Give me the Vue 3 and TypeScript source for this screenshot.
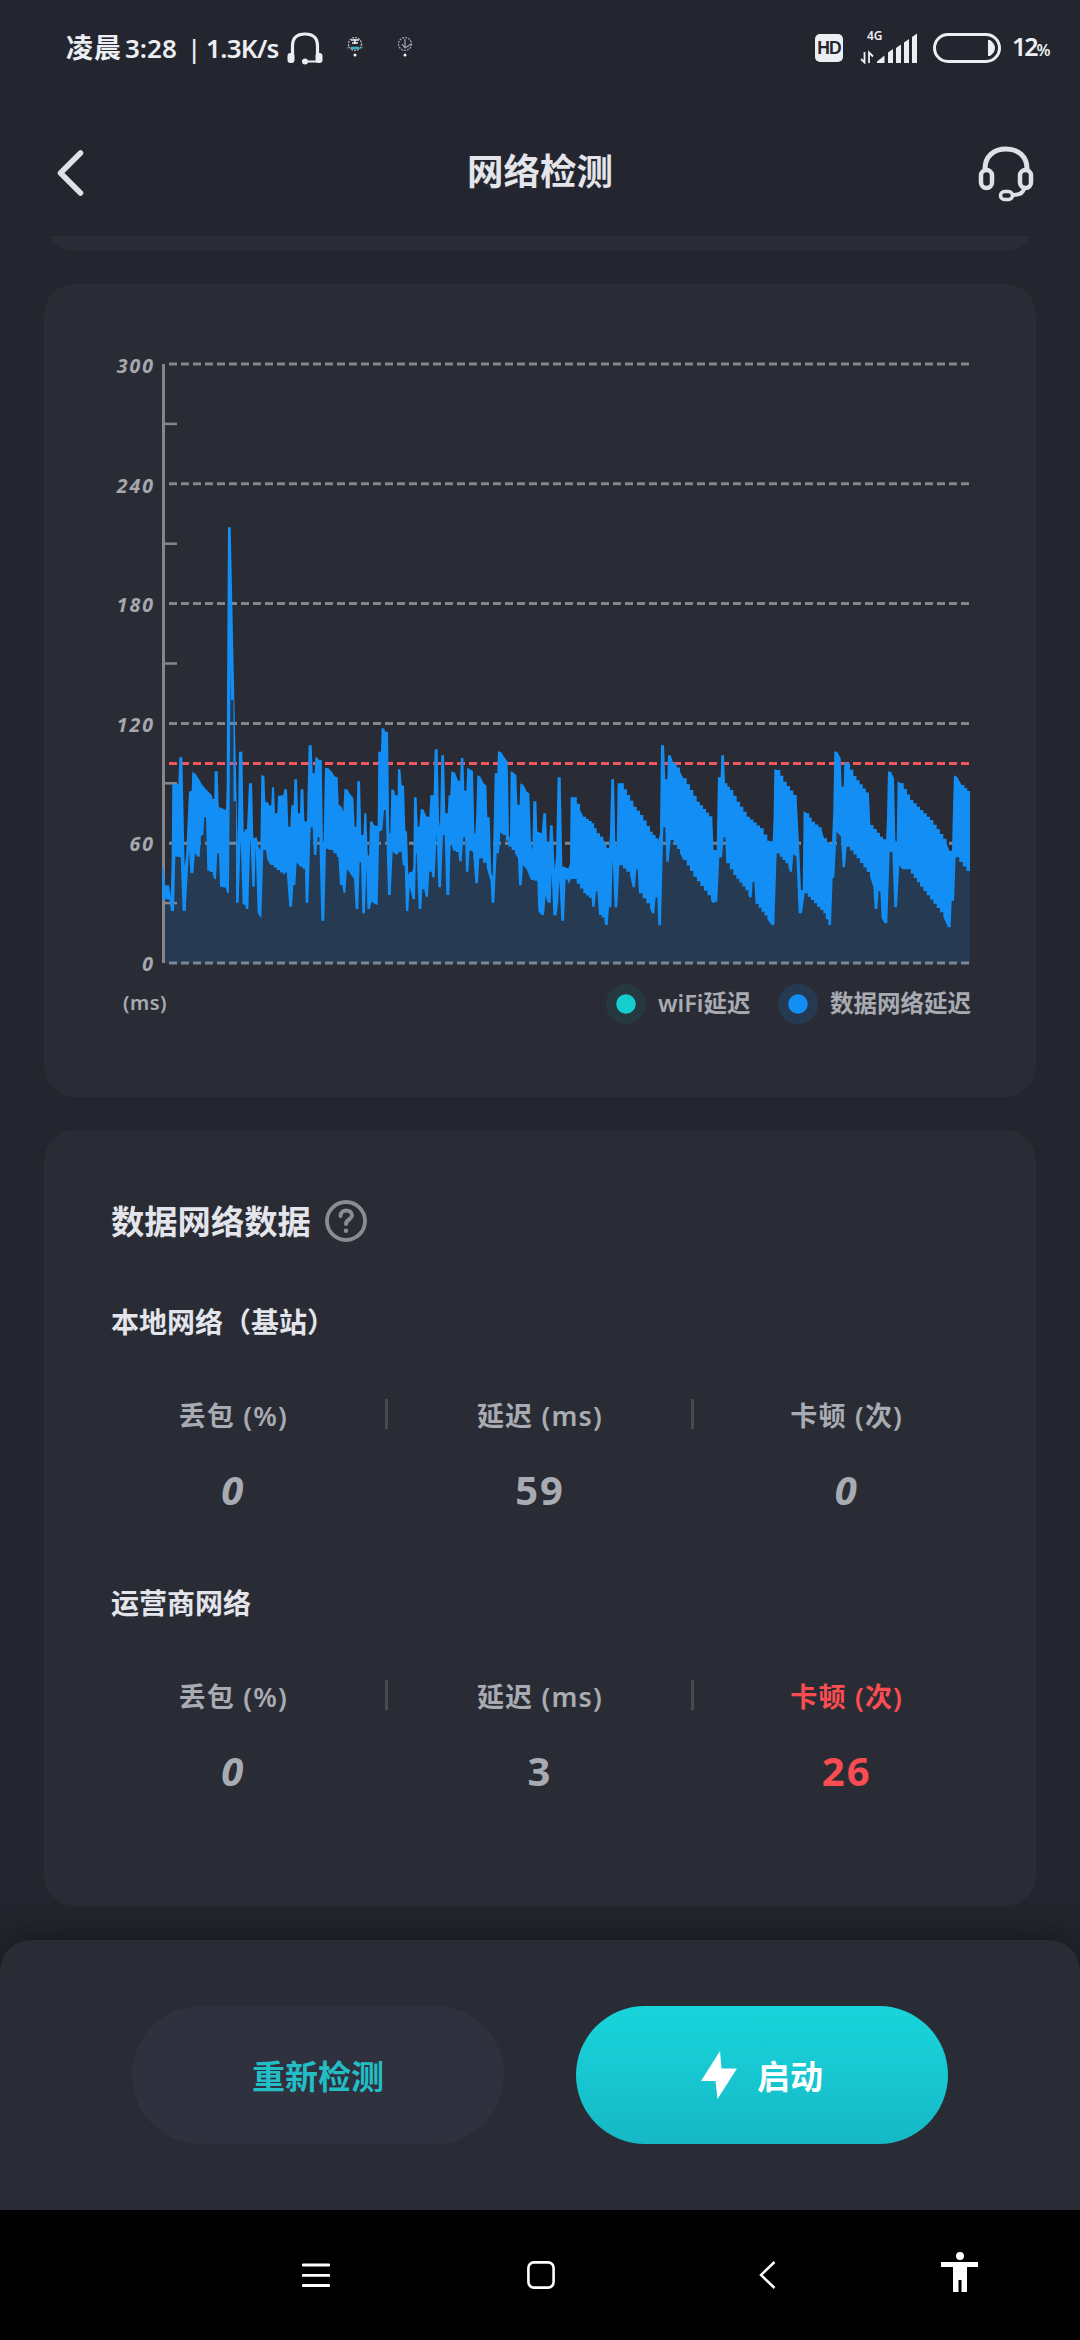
<script setup lang="ts">
type Point = [number, number]

interface Metric {
  label: string
  value: string
  alert?: boolean
}

interface Group {
  title: string
  metrics: Metric[]
}

const groups: Group[] = [
  {
    title: '本地网络（基站）',
    metrics: [
      { label: '丢包 (%)', value: '0' },
      { label: '延迟 (ms)', value: '59' },
      { label: '卡顿 (次)', value: '0' },
    ],
  },
  {
    title: '运营商网络',
    metrics: [
      { label: '丢包 (%)', value: '0' },
      { label: '延迟 (ms)', value: '3' },
      { label: '卡顿 (次)', value: '26', alert: true },
    ],
  },
]

const scaleLabels = [300, 240, 180, 120, 60, 0]
const gridLines = [0, 1, 2, 3, 4, 5].map((i) => 2 + i * 119.8)
const ticks = [0, 1, 2, 3, 4].map((i) => 61.9 + i * 119.8)

// Upper and lower bounds of the latency trace; three units per pixel, baseline at 790.
const shift = (offset: number, flat: number[]): Point[] => {
  const out: Point[] = []
  for (let i = 0; i < flat.length; i += 2) out.push([flat[i] + offset, flat[i + 1]])
  return out
}

const upper: Point[] = [
  ...shift(0, [
    37, 500, 41, 510, 46, 556, 57, 556, 62, 590, 65, 480, 67, 252, 85, 252, 88, 172, 97, 172, 104, 500, 108, 470, 117, 275, 125, 272,
    127, 215, 137, 222, 145, 235, 155, 252, 165, 265, 175, 275, 185, 285, 188, 297, 193, 297, 194, 214, 203, 214, 206, 320,
    215, 325, 228, 330, 230, 260, 231, 0, 234, -518, 242, -518, 253, 0, 263, 440, 267, 155, 277, 155, 281, 400, 286, 388, 291, 388,
    297, 250, 306, 250, 310, 415, 320, 412, 326, 440, 331, 450, 334, 225, 343, 228, 346, 305, 355, 308, 358, 318, 364, 315,
    366, 262, 372, 262, 375, 340, 382, 340, 384, 287, 400, 285, 403, 268, 411, 268, 415, 380, 421, 380, 424, 316, 431, 316,
    433, 238, 441, 238, 444, 340, 450, 340, 452, 268, 460, 268, 463, 364, 471, 364, 476, 136, 485, 136, 488, 220, 494, 220,
    496, 172, 504, 174, 506, 180, 515, 180, 519, 430, 521, 420, 525, 203, 535, 205, 545, 215, 555, 230, 563, 232, 566, 315, 573, 318,
    580, 335, 583, 268, 592, 268, 600, 282, 610, 293, 614, 380, 619, 382, 622, 244, 630, 244, 634, 405, 640, 405, 643, 340,
    649, 340, 653, 460, 657, 470, 660, 364, 668, 365, 672, 376, 683, 378, 685, 155, 693, 155, 695, 83, 704, 88, 705, 95, 714, 95,
    718, 400, 721, 400, 724, 268, 733, 270, 735, 285, 743, 287, 744, 208, 751, 208, 755, 256, 762, 258, 766, 392, 771, 395,
    775, 525, 779, 515, 787, 515, 790, 500,
  ]),
  ...shift(750, [
    42, 292, 50, 292, 53, 380, 58, 380, 62, 328, 70, 328, 75, 340, 80, 350, 88, 350, 91, 286, 101, 286, 104, 148, 113, 148,
    117, 360, 120, 380, 124, 166, 132, 166, 136, 340, 143, 340, 146, 286, 151, 286, 154, 214, 165, 218, 174, 242, 180, 242,
    183, 174, 190, 174, 193, 272, 199, 272, 202, 203, 210, 208, 219, 214, 223, 400, 226, 400, 229, 340, 232, 226, 241, 230,
    252, 252, 259, 256, 262, 352, 269, 352, 274, 520, 278, 530, 284, 220, 292, 220, 294, 154, 303, 156, 312, 170, 323, 185,
    327, 410, 330, 410, 332, 214, 341, 218, 349, 226, 352, 315, 359, 315, 361, 250, 371, 256, 380, 275, 388, 280, 393, 430,
    397, 450, 400, 304, 409, 304, 412, 395, 425, 400, 430, 340, 438, 340, 441, 425, 448, 425, 450, 376, 458, 376, 464, 510,
    468, 470, 473, 232, 482, 232, 487, 500, 505, 508, 510, 490, 512, 292, 521, 292, 540, 330, 550, 350, 575, 370, 590, 400,
    610, 420, 618, 430, 620, 445, 627, 445, 630, 400, 634, 238, 642, 238, 646, 430, 650, 440, 653, 250, 662, 250, 700, 320, 720, 345,
    750, 395, 775, 425, 780, 400, 783, 136, 792, 136, 796, 238, 802, 238, 804, 166, 812, 166, 820, 190, 840, 215,
  ]),
  ...shift(1590, [
    10, 235, 50, 305, 97, 360, 101, 450, 110, 450, 114, 232, 122, 232, 124, 166, 132, 166, 135, 250, 150, 270, 170, 305, 200, 350,
    240, 385, 262, 422, 278, 425, 281, 350, 283, 208, 292, 210, 310, 245, 350, 298, 357, 430, 363, 570, 368, 570, 371, 333,
    380, 340, 395, 365, 425, 390, 432, 415, 450, 438, 456, 430, 460, 330, 463, 154, 472, 156, 482, 175, 485, 260, 491, 260,
    493, 185, 500, 190, 520, 228, 567, 290, 571, 375, 600, 410, 618, 425, 621, 350, 624, 214, 633, 216, 642, 235, 646, 420,
    650, 430, 653, 244, 662, 250, 690, 300, 750, 360, 800, 430, 808, 452, 816, 452, 819, 330, 822, 226, 831, 230, 845, 255, 870, 282,
  ]),
]

const lower: Point[] = [
  ...shift(0, [
    37, 600, 50, 598, 58, 598, 63, 633, 72, 633, 76, 470, 92, 472, 98, 633, 107, 633, 117, 450, 121, 520, 130, 520, 135, 458,
    142, 470, 149, 470, 153, 408, 160, 405, 163, 352, 168, 352, 172, 512, 188, 520, 192, 537, 198, 537, 202, 460, 207, 460,
    210, 560, 228, 565, 231, 578, 237, 580, 241, 0, 242, -100, 243, 0, 258, 608, 266, 608, 272, 420, 278, 612, 286, 616, 288, 627,
    295, 627, 301, 415, 307, 560, 314, 560, 317, 440, 323, 640, 334, 655, 340, 450, 348, 450, 352, 480, 362, 495, 380, 510,
    400, 525, 410, 515, 418, 620, 426, 620, 430, 555, 436, 555, 440, 487, 450, 500, 465, 513, 467, 608, 475, 608, 482, 382,
    488, 382, 492, 465, 499, 465, 503, 412, 508, 412, 514, 662, 523, 662, 528, 445, 540, 450, 560, 470, 565, 470, 570, 555,
    577, 555, 580, 578, 586, 578, 591, 508, 600, 520, 612, 537, 617, 627, 625, 627, 629, 487, 633, 487, 637, 640, 645, 640,
    649, 500, 652, 627, 660, 627, 664, 605, 675, 612, 683, 615, 688, 395, 697, 390, 702, 330, 707, 330, 714, 585, 722, 585,
    728, 455, 740, 465, 748, 455, 755, 455, 758, 495, 764, 497, 768, 633, 775, 633, 779, 560, 788, 598, 795, 598, 798, 460,
  ]),
  ...shift(750, [
    50, 460, 56, 627, 64, 627, 67, 568, 73, 568, 77, 590, 84, 590, 88, 515, 95, 515, 97, 532, 104, 532, 110, 400, 115, 562,
    123, 562, 129, 405, 134, 405, 139, 585, 148, 585, 152, 425, 160, 452, 175, 460, 178, 484, 185, 484, 190, 412, 195, 412,
    198, 515, 205, 515, 209, 450, 219, 455, 226, 550, 234, 550, 238, 475, 260, 502, 272, 545, 275, 608, 283, 608, 290, 460,
    297, 460, 301, 397, 310, 405, 325, 440, 345, 460, 354, 475, 357, 556, 365, 556, 369, 496, 380, 508, 393, 540, 412, 545,
    415, 633, 424, 645, 432, 645, 437, 587, 443, 608, 452, 608, 455, 520, 460, 646, 470, 646, 475, 600, 478, 540, 484, 662,
    492, 662, 497, 537, 503, 540, 507, 553, 513, 537, 520, 537, 550, 580, 575, 600, 577, 620, 584, 620, 588, 574, 592, 574,
    597, 645, 613, 660, 615, 675, 623, 675, 627, 622, 634, 622, 638, 480, 644, 622, 652, 622, 658, 496, 690, 525, 698, 562,
    705, 562, 709, 508, 713, 508, 717, 580, 750, 625, 756, 640, 763, 640, 767, 592, 772, 592, 775, 676, 783, 676, 790, 382,
    796, 382, 799, 485, 806, 485, 812, 420, 840, 460,
  ]),
  ...shift(1590, [
    10, 480, 40, 530, 93, 600, 97, 608, 112, 603, 118, 472, 126, 472, 131, 412, 136, 412, 139, 490, 160, 525, 205, 582, 207, 592,
    215, 592, 218, 545, 223, 545, 227, 612, 262, 658, 275, 675, 283, 675, 290, 460, 325, 500, 330, 515, 336, 515, 340, 462,
    349, 470, 356, 640, 366, 640, 374, 580, 430, 640, 445, 675, 453, 675, 458, 533, 463, 533, 470, 395, 483, 410, 488, 502,
    495, 502, 500, 440, 530, 475, 570, 530, 580, 560, 584, 627, 592, 627, 596, 574, 601, 574, 605, 655, 614, 670, 622, 670,
    629, 455, 637, 455, 643, 622, 651, 622, 658, 496, 667, 508, 683, 508, 720, 560, 790, 650, 804, 682, 812, 682, 815, 603, 822, 603,
    827, 472, 870, 527,
  ]),
]

// Long slopes are drawn as one stair per sample.
const stair = (points: Point[]): Point[] => {
  const out: Point[] = [points[0]]
  for (let i = 1; i < points.length; i++) {
    const [x0, y0] = points[i - 1]
    const [x1, y1] = points[i]
    const n = Math.round((x1 - x0) / 9.7)
    if (n > 1) {
      for (let k = 1; k <= n; k++) {
        const x = x0 + ((x1 - x0) * k) / n
        out.push([x, y0 + ((y1 - y0) * (k - 1)) / n])
        out.push([x, y0 + ((y1 - y0) * k) / n])
      }
    } else {
      out.push([x1, y1])
    }
  }
  return out
}

const join = (points: Point[]): string => points.map(([x, y]) => `${x.toFixed(1)},${y.toFixed(1)}`).join(' ')
const top = stair(upper)
const traceShape = join([...top, ...stair(lower).reverse()])
const areaShape = join([...top, [2460, 790], [39, 790]])
</script>

<template>
  <div class="screen">
    <div class="status">
      <span class="clock">凌晨</span>
      <span class="time">3:28</span>
      <span class="bar">|</span>
      <span class="speed">1.3K/s</span>
      <svg class="phones" width="36" height="34" viewBox="0 0 36 34">
        <path d="M5.500 24V15C5.500 6.500 10 3 18 3s12.500 3.500 12.500 12v9" fill="none" stroke="#eceef2" stroke-width="3.200" />
        <rect x="0.500" y="22" width="7" height="10" rx="3" fill="#eceef2" />
        <rect x="28.500" y="22" width="7" height="10" rx="3" fill="#eceef2" />
        <path d="M18 30.500h13" stroke="#eceef2" stroke-width="2" />
        <circle cx="18" cy="30.500" r="3" fill="#eceef2" />
      </svg>
      <svg class="mini" width="70" height="26" viewBox="0 0 70 26">
        <circle cx="10" cy="9" r="6.500" fill="none" stroke="#b9bdc8" stroke-width="1.200" stroke-dasharray="2 1" />
        <path d="M6 5h8M7 8h6M10 4v5" stroke="#e8eaf0" stroke-width="1.700" />
        <path d="M6 13h8" stroke="#35b8c6" stroke-width="2.500" />
        <path d="M2 13l2-1M16 13l2-1" stroke="#5d6174" stroke-width="1.500" />
        <circle cx="10" cy="20" r="1.500" fill="#fff" />
        <circle cx="60" cy="9" r="6.500" fill="none" stroke="#aaa4bb" stroke-width="1.200" stroke-dasharray="2 1" />
        <path d="M60 4v8M57 9l3 4 6-4" fill="none" stroke="#aaa4bb" stroke-width="1.200" />
        <circle cx="60" cy="20" r="1.500" fill="#fff" />
      </svg>
      <span class="fill"></span>
      <span class="hd">HD</span>
      <div class="signal">
        <span class="net">4G</span>
        <svg width="58" height="32" viewBox="0 0 58 32">
          <path d="M4.500 20v10.500L1 27M9 31V20.500l4 4" fill="none" stroke="#eceef2" stroke-width="1.800" />
          <path
            d="M17 31v-1.500l7.500-6V31zM28 31V20.500l5-3.500v14zM36 31V16l5-3.500V31zM44 31V10.500L49 7v24zM52 31V5l5-3.500V31z"
            fill="#eceef2"
          />
        </svg>
      </div>
      <svg class="battery" width="68" height="30" viewBox="0 0 68 30">
        <rect x="1.500" y="1.500" width="65" height="27" rx="13.500" fill="none" stroke="#eceef2" stroke-width="3" />
        <path d="M55 7h2c3 2 5 5 5 8s-2 6-5 8h-2z" fill="#eceef2" />
      </svg>
      <span class="percent">12<small>%</small></span>
    </div>

    <header class="header">
      <svg width="27" height="46" viewBox="0 0 27 46">
        <path d="M23.500 3L3.500 23l20 20" fill="none" stroke="#dfe1e8" stroke-width="5.500" stroke-linecap="round" stroke-linejoin="round" />
      </svg>
      <h1>网络检测</h1>
      <svg width="56" height="56" viewBox="0 0 56 56" fill="none" stroke="#dfe1e8">
        <path d="M7 23C7 10 16 3 28 3s21 7 21 20" stroke-width="5" />
        <rect x="3" y="24" width="11" height="18" rx="5.500" stroke-width="4.500" />
        <rect x="42" y="24" width="11" height="18" rx="5.500" stroke-width="4.500" />
        <path d="M46 43c-1 4-5 6-11 6" stroke-width="4" />
        <rect x="22.500" y="45.500" width="12" height="8" rx="4" stroke-width="3.500" />
      </svg>
    </header>

    <main class="content">
      <div class="peek"><div class="peek-card"></div></div>

      <section class="card chart-card">
        <div class="chart">
          <div class="scale">
            <span v-for="n in scaleLabels" :key="n">{{ n }}</span>
          </div>
          <svg class="plot" width="810" height="604" viewBox="0 0 810 604">
            <path v-for="y in gridLines" :key="y" :d="`M8 ${y}H809`" stroke="#83868d" stroke-width="3" stroke-dasharray="8 4" />
            <path d="M8 401.500H809" stroke="#f4565d" stroke-width="3" stroke-dasharray="8 4" />
            <g transform="translate(-11 338) scale(0.33333)">
              <polygon :points="areaShape" fill="#128df2" fill-opacity="0.15" />
            </g>
            <path d="M2.500 2V601" stroke="#83868d" stroke-width="3" />
            <path v-for="y in ticks" :key="y" :d="`M2 ${y}H16`" stroke="#83868d" stroke-width="2.500" />
            <g transform="translate(-11 338) scale(0.33333)">
              <polygon :points="traceShape" fill="#128ef4" />
            </g>
          </svg>
        </div>
        <div class="legend">
          <span class="unit">(ms)</span>
          <span class="dot teal"></span>
          <span class="wifi">wiFi延迟</span>
          <span class="dot blue"></span>
          <span class="mobile">数据网络延迟</span>
        </div>
      </section>

      <section class="card data-card">
        <div class="heading">
          <h2>数据网络数据</h2>
          <span class="help">
            <svg width="42" height="42" viewBox="0 0 42 42" fill="none" stroke="#8a8c94">
              <circle cx="21" cy="21" r="19" stroke-width="3.800" />
              <path d="M15.500 16c0-4 3-5.500 5.500-5.500 3 0 6 1.500 6 5s-6 4.500-6 8.500" stroke-width="4" stroke-linecap="round" />
              <circle cx="21" cy="30.700" r="2.300" fill="#8a8c94" stroke="none" />
            </svg>
          </span>
        </div>
        <div v-for="group in groups" :key="group.title" class="group">
          <h3>{{ group.title }}</h3>
          <div class="metrics">
            <div v-for="m in group.metrics" :key="m.label" class="metric" :class="{ alert: m.alert }">
              <span class="label">{{ m.label }}</span>
              <span class="value" :class="{ zero: m.value === '0' }">{{ m.value }}</span>
            </div>
          </div>
        </div>
      </section>
    </main>

    <footer class="actions">
      <button class="retry">重新检测</button>
      <button class="start">
        <svg width="36" height="48" viewBox="0 0 36 48"><path d="M19 0L0 30h14.500L16.500 48 36 17.500H20.500z" fill="#fff" /></svg>
        <span>启动</span>
      </button>
    </footer>

    <nav class="nav">
      <svg width="28" height="28" viewBox="0 0 28 28"><path d="M1 4h26M1 14.300h26M1 24.500h26" stroke="#fff" stroke-width="2.800" stroke-linecap="round" /></svg>
      <svg width="28" height="28" viewBox="0 0 28 28"><rect x="1.400" y="1.400" width="25.200" height="25.200" rx="5.500" fill="none" stroke="#fff" stroke-width="2.600" /></svg>
      <svg width="17" height="28" viewBox="0 0 17 28"><path d="M15.500 1L2 14l13.500 13" fill="none" stroke="#fff" stroke-width="2.500" /></svg>
      <svg width="38" height="40" viewBox="0 0 38 40"><circle cx="19" cy="4" r="4" fill="#fff" /><path d="M0 10h37v5H26v25h-5.500V28h-3v12H12V15H0z" fill="#fff" /></svg>
    </nav>
  </div>
</template>

<style>
body {
  margin: 0;
  background: #24262f;
}
</style>

<style scoped>
.screen {
  width: 1080px;
  height: 2340px;
  display: flex;
  flex-direction: column;
  overflow: hidden;
  background: #24262f;
  color: #e3e5eb;
  font-family: 'Noto Sans', 'Noto Sans CJK SC', sans-serif;
  white-space: nowrap;
}
h1,
h2,
h3 {
  margin: 0;
}
svg {
  display: block;
  flex: none;
}
.status {
  height: 96px;
  flex: none;
  box-sizing: border-box;
  padding: 0 31px 0 66px;
  display: flex;
  align-items: center;
  font-size: 26px;
  font-weight: 600;
  color: #eceef2;
}
.status > span {
  line-height: 32px;
}
.clock {
  width: 59px;
  font-size: 27px;
  font-weight: 700;
  letter-spacing: 1px;
}
.time {
  width: 62px;
}
.bar {
  width: 19px;
  font-weight: 500;
}
.speed {
  width: 81px;
  letter-spacing: -0.700px;
}
.mini {
  margin-left: 22px;
}
.fill {
  flex: 1;
}
.hd {
  width: 28px;
  height: 28px;
  line-height: 29px !important;
  border-radius: 5px;
  background: #eceef2;
  color: #24262f;
  font-size: 17.500px;
  font-weight: 700;
  font-family: 'Liberation Sans', sans-serif;
  text-align: center;
  letter-spacing: -0.800px;
}
.signal {
  position: relative;
  margin-left: 17px;
}
.net {
  position: absolute;
  left: 7px;
  top: -4px;
  font-size: 12px;
  line-height: 16px;
}
.battery {
  margin-left: 15px;
}
.percent {
  width: 37px;
  margin-left: 11px;
  font-size: 25px;
  letter-spacing: -2px;
}
.percent small {
  font-size: 16px;
}
.header {
  height: 140px;
  flex: none;
  box-sizing: border-box;
  padding: 14px 46px 0 57px;
  display: flex;
  align-items: flex-start;
  justify-content: space-between;
}
.header svg {
  margin-top: 40px;
}
.header svg:last-child {
  margin-top: 36px;
}
.header h1 {
  margin-top: 34px;
  padding-left: 18px;
  font-size: 36.500px;
  line-height: 54px;
  font-weight: 700;
}
.content {
  height: 1704px;
  flex: none;
  box-sizing: border-box;
  padding: 0 44px;
}
.peek {
  height: 15px;
  display: flex;
  align-items: flex-end;
  overflow: hidden;
}
.peek-card {
  width: 100%;
  height: 60px;
  flex: none;
  border-radius: 30px;
  background: #2a2c35;
}
.card {
  box-sizing: border-box;
  border-radius: 31px;
  background: #2a2c35;
}
.chart-card {
  height: 813px;
  margin-top: 33px;
  padding: 78px 64px 0 60px;
}
.chart {
  display: flex;
}
.scale {
  width: 51px;
  margin: -9px 6px -11px 0;
  display: flex;
  flex-direction: column;
  justify-content: space-between;
  text-align: right;
  font-size: 19.500px;
  font-weight: 700;
  font-style: italic;
  letter-spacing: 2px;
  color: #a6a8b0;
}
.scale span {
  line-height: 26px;
}
.legend {
  height: 40px;
  display: flex;
  align-items: center;
  margin-top: 18px;
  font-size: 23.500px;
  font-weight: 600;
  color: #a9abb2;
}
.legend > span:not(.dot) {
  line-height: 30px;
  margin-top: -2px;
}
.unit {
  width: 483px;
  padding-left: 19px;
  font-size: 20px;
  letter-spacing: 0.500px;
}
.dot {
  width: 20px;
  height: 20px;
  flex: none;
  border: 10px solid;
  border-radius: 50%;
  background-clip: padding-box;
}
.teal {
  background-color: #15cccf;
  border-color: #263940;
}
.blue {
  background-color: #128ef4;
  border-color: #253a51;
}
.wifi {
  width: 120px;
  padding-left: 12px;
}
.mobile {
  padding-left: 12px;
}
.data-card {
  height: 776px;
  margin-top: 33px;
  padding: 69px 36px 0;
}
.heading {
  height: 44px;
  display: flex;
  align-items: center;
  padding-left: 31px;
}
.heading h2 {
  width: 214px;
  font-size: 33.300px;
  line-height: 44px;
  font-weight: 700;
}
.group {
  height: 281px;
}
.group h3 {
  padding: 59px 0 0 31px;
  font-size: 28px;
  line-height: 40px;
  font-weight: 600;
}
.metrics {
  display: flex;
  padding-top: 57px;
}
.metric {
  position: relative;
  width: 307px;
  display: flex;
  flex-direction: column;
  align-items: center;
  color: #a9abb2;
}
.metric + .metric::before {
  content: '';
  position: absolute;
  left: -2px;
  top: 0;
  width: 3px;
  height: 30px;
  background: #484a52;
}
.label {
  font-size: 27px;
  line-height: 34px;
  font-weight: 600;
  letter-spacing: 1.200px;
}
.value {
  margin-top: 33px;
  font-size: 40px;
  line-height: 48px;
  font-weight: 700;
  letter-spacing: 2px;
}
.zero {
  font-style: italic;
}
.metric.alert {
  color: #fb4c52;
}
.actions {
  height: 270px;
  flex: none;
  box-sizing: border-box;
  padding: 66px 132px 0;
  display: flex;
  justify-content: space-between;
  border-radius: 31px 31px 0 0;
  background: #2a2c35;
  box-shadow: 0 0 36px rgba(12, 14, 20, 0.75);
}
.actions button {
  width: 372px;
  height: 138px;
  padding: 0;
  border: 0;
  border-radius: 69px;
  display: flex;
  align-items: center;
  justify-content: center;
  font: inherit;
  font-size: 33px;
  font-weight: 700;
}
.retry {
  background: #2f323e;
  color: #23bdc6;
}
.start {
  gap: 20px;
  background: linear-gradient(#18d5db, #16b8c6);
  color: #fff;
}
.nav {
  height: 130px;
  flex: none;
  box-sizing: border-box;
  padding: 0 102px 0 302px;
  display: grid;
  grid-template-columns: 225px 232px 182px 38px;
  align-items: center;
  background: #000;
}
.nav svg:last-child {
  margin-top: -6px;
}
</style>
